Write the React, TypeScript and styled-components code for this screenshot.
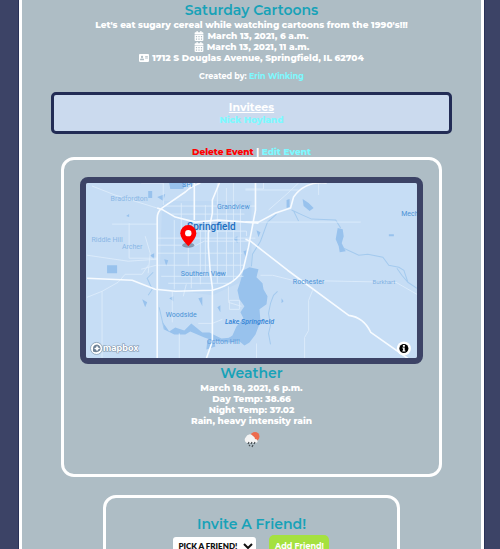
import React from "react";
import styled, { createGlobalStyle } from "styled-components";
import { FaCalendarAlt, FaAddressCard } from "react-icons/fa";

const GlobalStyle = createGlobalStyle`
  *, *::before, *::after { box-sizing: border-box; }
  body {
    margin: 0;
    background: #3c4366;
    color: #fff;
    font: 800 9px/11px Montserrat, Inter, "Open Sans", sans-serif;
  }
`;

const Page = styled.div`
  height: 100vh;
  overflow: hidden;
  padding: 0 16px 0 19px;
`;

const Panel = styled.main`
  display: flex;
  flex-direction: column;
  align-items: center;
  min-height: 100%;
  padding: 1px 29px 0;
  background: #aebdc5;
  border: solid #fff;
  border-width: 0 3px;
  box-shadow: 0 0 0 1px #2a3258;
  text-align: center;
`;

const Heading = styled.h2`
  margin: 0;
  color: #17a2b8;
  font-size: 14px;
  line-height: 18px;
  font-weight: 600;
`;

const Line = styled.p`
  display: flex;
  align-items: center;
  justify-content: center;
  gap: 3px;
  margin: 0;

  svg {
    width: auto;
    height: 10px;
  }
`;

const Creator = styled.p`
  margin: 8px 0 10px;
  font-size: 8px;
  font-weight: 700;
`;

const TextLink = styled.a<{ $danger?: boolean }>`
  color: ${(p) => (p.$danger ? "#f00" : "#7df9ff")};
  text-decoration: none;
`;

const Invitees = styled.section`
  width: 100%;
  padding: 6px;
  background: #cbdaee;
  border: 3px solid #222c55;
  border-radius: 5px;
`;

const InviteesTitle = styled.h3`
  margin: 0;
  font-size: 11px;
  line-height: 13px;
  font-weight: 700;
  text-decoration: underline;
`;

const Actions = styled.nav`
  margin: 12px 0 0;
`;

const Card = styled.section<{ $narrow?: boolean }>`
  width: ${(p) => (p.$narrow ? "74%" : "95%")};
  margin-bottom: 18px;
  padding: ${(p) => (p.$narrow ? "17px" : "17px 16px 25px")};
  border: 3px solid #fff;
  border-radius: 13px;
`;

const MapFrame = styled.div`
  border: 6px solid #3c4366;
  border-radius: 8px;
  overflow: hidden;
`;

const MapDrawing = styled.svg`
  display: block;
  width: 100%;
  height: auto;
`;

const WeatherIcon = styled.svg`
  display: block;
  width: 18px;
  height: 18px;
  margin: 5px auto 0;
`;

const FriendForm = styled.form`
  display: flex;
  justify-content: center;
  align-items: center;
  gap: 13px;
  margin-top: 2px;
`;

const FriendSelect = styled.select`
  width: 83px;
  height: 18px;
  padding: 0 0 0 1px;
  border: 0;
  border-radius: 3px;
  background: #fff;
  color: #111;
  font: 800 8px/14px Lato, sans-serif;
`;

const AddButton = styled.button`
  width: 60px;
  height: 22px;
  padding: 0;
  border: 0;
  border-radius: 5px;
  background: #a5e13f;
  color: #fff;
  font: inherit;
  font-size: 8px;
  font-weight: 700;
`;

const streets = [
  "M6 3L29 12L71 25", "M26 41H71", "M43 40V75H71", "M1 72L42 78L71 76", "M1 114L16 108L32 99L39 91L56 91L62 82",
  "M16 108V175", "M71 55H169", "M71 62H110L118 58H165", "M55 86L70 82H158", "M88 37V106", "M95 20V55", "M102 39V83",
  "M114 44V101", "M119 22V92", "M131 0V100", "M140 5V92", "M147 0V98", "M154 22V90", "M79 23H169", "M85 31H158",
  "M71 70H156", "M75 93H157", "M82 100H145", "M86 108V139", "M100 101L97 113", "M105 88V105", "M142 103V119L155 123",
  "M143 117H153V126H143Z", "M136 136L126 140H112", "M93 150V175", "M172 39H274", "M159 7H212", "M212 0L198 13L182 27",
  "M232 0V12", "M177 0V6H159", "M174 92L186 92L206 97L309 99L330 111", "M226 107L222 117V147L218 154V175", "M170 160V175",
  "M59 53L64 70L62 90", "M55 0H77V22", "M108 48H160V53",
];

const highways = [
  "M114 0Q105 3 99 9L77 24Q71 28 71 35V175", "M71 25L77 27L89 34L109 39L132 37L172 40",
  "M108 0V37", "M133 0L126 17V30L122 50V64L124 90L126 104V158L120 175",
  "M169 0V27L162 64L157 85Q151 100 126 107L89 108L69 106L46 97L1 95",
  "M240 0Q218 -2 207 14L204 25L189 30L172 39H159", "M159 56L164 58L201 87L262 132Q277 134 284 149L321 175",
];

const labels: [string, number, number, number, string][] = [
  ["SPI", 101, 4, 7, "#438ed5"],
  ["Bradfordton", 43, 18, 7, "#8ab7e5"],
  ["Grandview", 147, 26, 7, "#4a92d6"],
  ["Riddle Hill", 21, 59, 7, "#8ab7e5"],
  ["Archer", 46, 66, 7, "#8ab7e5"],
  ["Southern View", 117, 93, 7, "#4a92d6"],
  ["Woodside", 95, 134, 7, "#4a92d6"],
  ["Cotton Hill", 137, 161, 7, "#5c9bdb"],
  ["Rochester", 222, 101, 7, "#4a92d6"],
  ["Burkhart", 297, 101, 6, "#7fb0e2"],
  ["Mech", 323, 33, 7, "#4a92d6"],
];

const AreaMap = () => (
  <MapDrawing viewBox="0 0 330 175" role="img" aria-label="Map of Springfield" fontFamily="Roboto, sans-serif" fontWeight="400">
    <rect width="330" height="175" fill="#c6ddf5" />
    <path d="M76 18H165V94L126 112L73 105Z" fill="#bfd9f4" />
    <g fill="#98c2ed">
      <path d="M157 87L163 84L172 86L170 94L176 100L177 106L181 113L180 121L173 126L174 138L169 151L163 159L158 162L152 157L145 159L137 158L146 152L150 143L157 135L154 129L158 123L153 116L151 107L154 98Z" />
      <path d="M76 138L83 148L89 144L98 147L105 140L116 149L123 149L135 155L146 154L143 159L127 157L118 154L104 148L99 151L88 151L78 146Z" />
      <path d="M216 16L222 20L227 25L223 28L217 23Z" />
      <path d="M251 45L256 46L257 53L255 60L259 68L253 69L252 63L249 56Z" />
      <path d="M21 82h10v8h-10zM83 0h17l-3 6h-13zM71 14l8-3-2 7zM40 33l3-2v3zM64 72l4-2v6zM78 76l4 1-2 6zM200 17l3-1v8l-3 1zM170 47l4 2-2 5zM302 51h5v2h-5zM83 115l4-2v5zM56 116l5 3-2 5zM112 115l4-1v9zM131 124l3-2v7zM62 8h4v7h-4zM147 55l4-2v7zM157 68l3-1v9zM132 88l4 2-3 4zM195 115l2 3-2 2zM121 157l6-2 2 8-9 3z" />
    </g>
    <g fill="none" stroke="#a4caee">
      <path d="M205 27L216 32L225 36L249 37L254 45M257 65L272 72L281 71L296 74L302 82L312 84L317 87L321 99M207 28L212 38M190 31L181 39L174 58L166 71L165 83M310 85L315 92L321 99L330 105M191 108L187 112L184 120L182 130L184 142L182 150L184 161M67 89L61 95L66 106L62 112M73 124L78 146" />
    </g>
    <g fill="none" stroke="#e0edfb" strokeWidth="0.8">{streets.map((d) => <path key={d} d={d} />)}</g>
    <g fill="none" stroke="#f7fbff" strokeWidth="1.6" strokeLinejoin="round">{highways.map((d) => <path key={d} d={d} />)}</g>
    {labels.map(([name, x, y, size, color]) => (
      <text key={name} x={x} y={y} fontSize={size} fill={color} textAnchor="middle">{name}</text>
    ))}
    <text x="125" y="47" fontSize="10" fontWeight="500" fill="#1d6fc0" textAnchor="middle">Springfield</text>
    <text x="163" y="141" fontSize="7" fontWeight="500" fill="#3585d6" fontStyle="italic" textAnchor="middle">Lake Springfield</text>
    <ellipse cx="102" cy="62" rx="6" ry="2.5" fill="#304860" opacity="0.45" />
    <path d="M102 63Q94 55 94 50A8 8 0 0 1 110 50Q110 55 102 63Z" fill="#f00" />
    <circle cx="102" cy="50" r="3.2" fill="#fff" />
    <circle cx="10.5" cy="165" r="6" fill="#fff" stroke="#7790a8" strokeWidth="0.7" />
    <path d="M7 168Q6 161 11 161A4 4 0 0 1 14 167Q11 170 7 168Z" fill="#6e8195" />
    <path d="M11 162L12 164L14 165L12 166L11 168L10 166L8 165L10 164Z" fill="#fff" />
    <text x="17" y="168" fontFamily="Inter, sans-serif" fontWeight="700" fontSize="9" fill="#fff" stroke="#7d93aa" strokeWidth="1.2" paintOrder="stroke">mapbox</text>
    <circle cx="317" cy="165" r="7" fill="#fff" />
    <circle cx="317" cy="165" r="4.5" fill="#000" />
    <path d="M316 161.5h2v1.8h-2zM315.5 164h2.3v3h0.7v1h-3v-1h0.7v-2h-0.7z" fill="#fff" />
  </MapDrawing>
);

export default function App() {
  return (
    <>
      <GlobalStyle />
      <Page>
        <Panel>
          <Heading as="h1">Saturday Cartoons</Heading>
          <Line>Let's eat sugary cereal while watching cartoons from the 1990's!!!</Line>
          <Line><FaCalendarAlt />March 13, 2021, 6 a.m.</Line>
          <Line><FaCalendarAlt />March 13, 2021, 11 a.m.</Line>
          <Line><FaAddressCard />1712 S Douglas Avenue, Springfield, IL 62704</Line>
          <Creator>Created by: <TextLink href="#creator">Erin Winking</TextLink></Creator>
          <Invitees>
            <InviteesTitle>Invitees</InviteesTitle>
            <TextLink href="#invitee">Nick Hoyland</TextLink>
          </Invitees>
          <Actions>
            <TextLink href="#delete" $danger>Delete Event</TextLink> | <TextLink href="#edit">Edit Event</TextLink>
          </Actions>
          <Card>
            <MapFrame><AreaMap /></MapFrame>
            <Heading>Weather</Heading>
            <Line>March 18, 2021, 6 p.m.</Line>
            <Line>Day Temp: 38.66</Line>
            <Line>Night Temp: 37.02</Line>
            <Line>Rain, heavy intensity rain</Line>
            <WeatherIcon viewBox="0 0 18 18" role="img" aria-label="Rain">
              <circle cx="12" cy="5.5" r="4.5" fill="#ed6b4d" />
              <path d="M4 12A3.5 3.5 0 0 1 3 6A4 4 0 0 1 10 5Q12 6 12 8Q15 8 14.5 11Q14 12 12 12Z" fill="#f4f4f4" />
              <path d="M6 11L5 13M9 11L8 13M12 11L11 13M7 14L6 15M10 14L9 16" stroke="#454b50" strokeWidth="1.2" />
            </WeatherIcon>
          </Card>
          <Card $narrow>
            <Heading>Invite A Friend!</Heading>
            <FriendForm>
              <FriendSelect aria-label="Friend"><option>PICK A FRIEND!</option></FriendSelect>
              <AddButton type="button">Add Friend!</AddButton>
            </FriendForm>
          </Card>
        </Panel>
      </Page>
    </>
  );
}
